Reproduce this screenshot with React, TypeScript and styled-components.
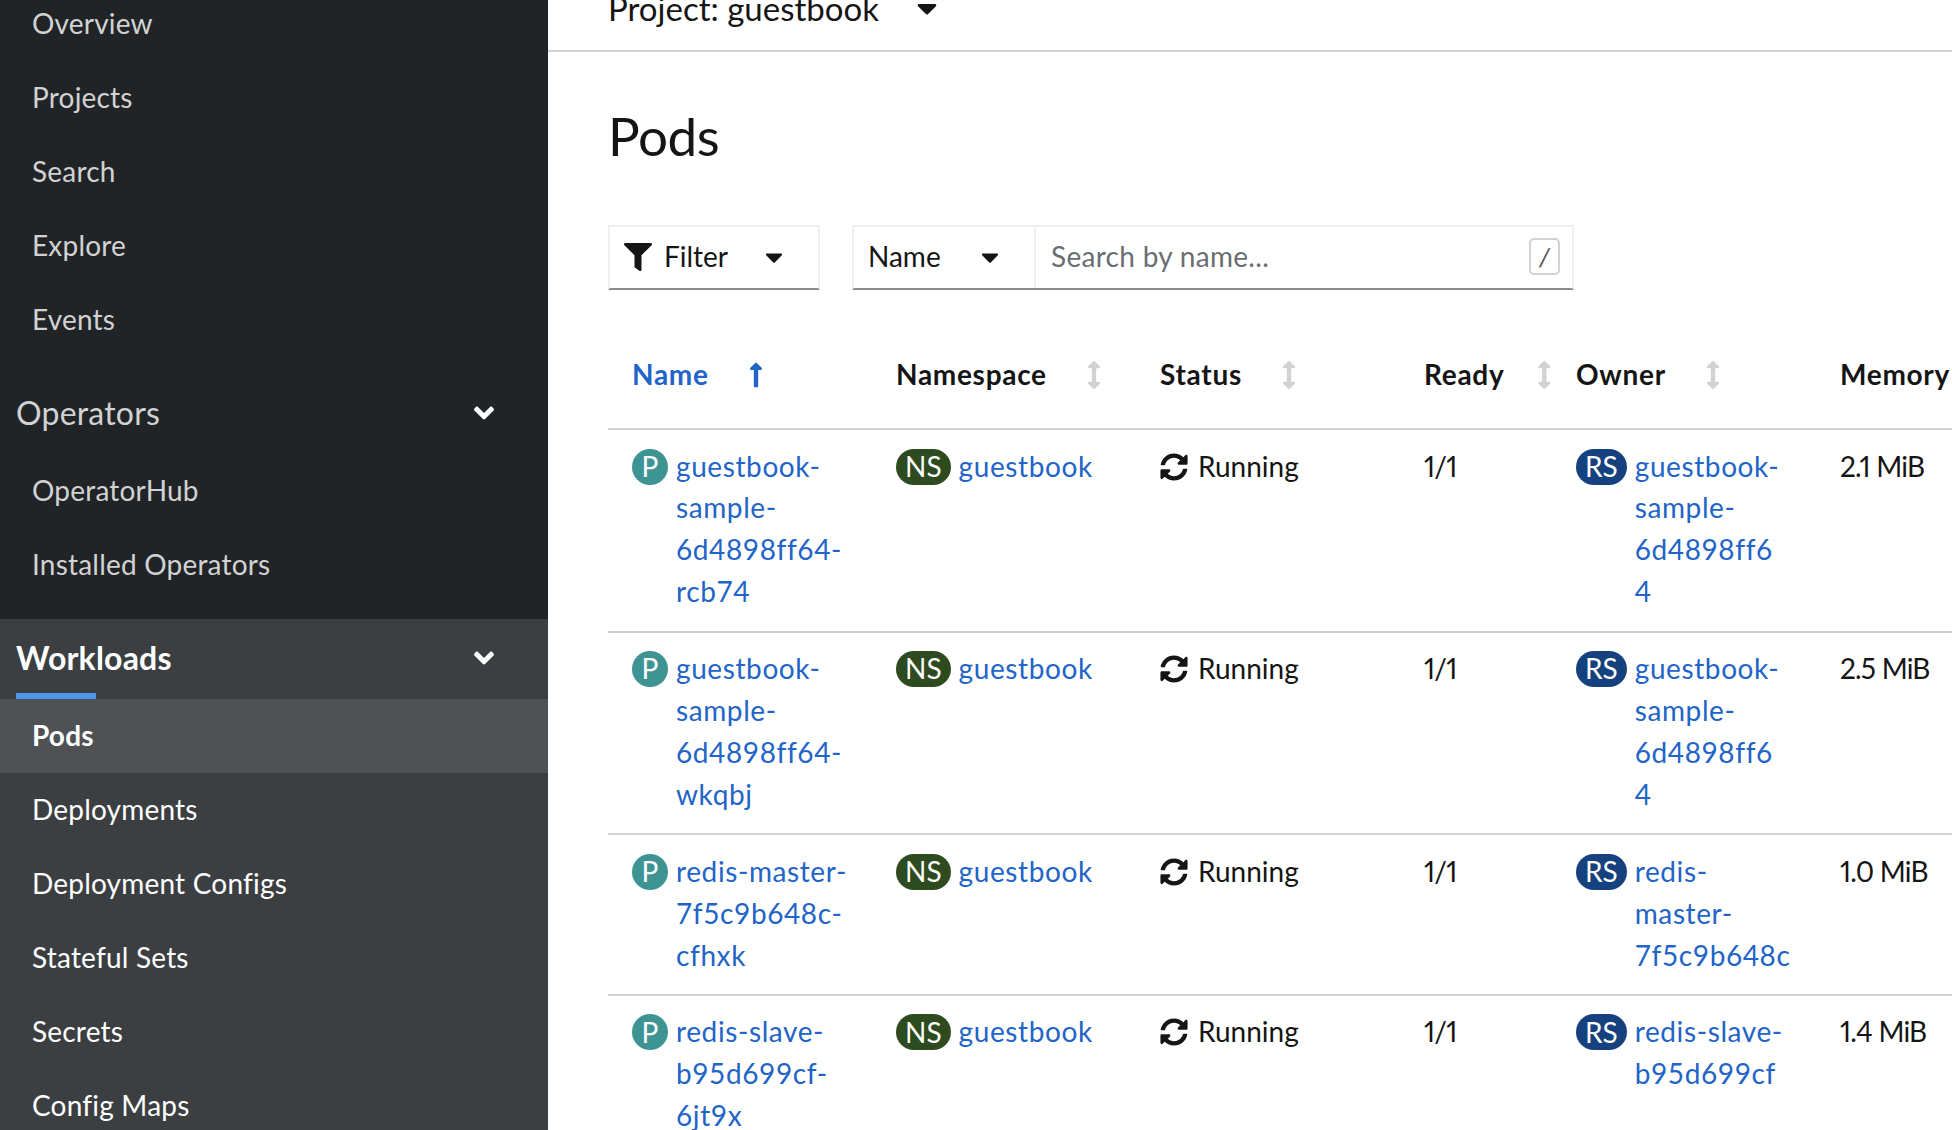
import React from 'react';
import styled, { createGlobalStyle } from 'styled-components';
import { FaAngleDown, FaArrowsAltV, FaCaretDown, FaFilter, FaLongArrowAltUp, FaSyncAlt } from 'react-icons/fa';

const FONT = `Lato, "Liberation Sans", sans-serif`;

const topItems = ['Overview', 'Projects', 'Search', 'Explore', 'Events'];
const operatorItems = ['OperatorHub', 'Installed Operators'];
const workloadItems = ['Pods', 'Deployments', 'Deployment Configs', 'Stateful Sets', 'Secrets', 'Config Maps'];

const columns = ['Name', 'Namespace', 'Status', 'Ready', 'Owner', 'Memory'];

const pods = [
  {
    name: ['guestbook-', 'sample-', '6d4898ff64-', 'rcb74'],
    owner: ['guestbook-', 'sample-', '6d4898ff6', '4'],
    memory: '2.1 MiB',
  },
  {
    name: ['guestbook-', 'sample-', '6d4898ff64-', 'wkqbj'],
    owner: ['guestbook-', 'sample-', '6d4898ff6', '4'],
    memory: '2.5 MiB',
  },
  {
    name: ['redis-master-', '7f5c9b648c-', 'cfhxk'],
    owner: ['redis-', 'master-', '7f5c9b648c'],
    memory: '1.0 MiB',
  },
  {
    name: ['redis-slave-', 'b95d699cf-', '6jt9x'],
    owner: ['redis-slave-', 'b95d699cf'],
    memory: '1.4 MiB',
  },
];

const App: React.FC = () => {
  return (
    <>
      <GlobalStyle />
      <Page>
        <Sidebar>
          <NavList>
            {topItems.map((item) => (
              <NavItem key={item}>{item}</NavItem>
            ))}
          </NavList>
          <NavGroup>
            <GroupHeading>
              Operators
              <FaAngleDown size={32} />
            </GroupHeading>
            {operatorItems.map((item) => (
              <NavItem key={item}>{item}</NavItem>
            ))}
          </NavGroup>
          <NavGroup $active>
            <GroupHeading $active>
              Workloads
              <FaAngleDown size={32} />
            </GroupHeading>
            {workloadItems.map((item) => (
              <NavItem key={item} $current={item === 'Pods'}>
                {item}
              </NavItem>
            ))}
          </NavGroup>
        </Sidebar>
        <Main>
          <ProjectBar>
            Project: guestbook
            <FaCaretDown size={32} />
          </ProjectBar>
          <Content>
            <Title>Pods</Title>
            <Toolbar>
              <FilterButton>
                <FaFilter size={28} />
                <span>Filter</span>
                <FaCaretDown size={28} />
              </FilterButton>
              <SearchGroup>
                <NameSelect>
                  <span>Name</span>
                  <FaCaretDown size={28} />
                </NameSelect>
                <SearchField>
                  Search by name...
                  <SlashKey>/</SlashKey>
                </SearchField>
              </SearchGroup>
            </Toolbar>
          </Content>
          <HeadRow>
            {columns.map((column, index) => (
              <HeadCell key={column} $sorted={index === 0}>
                {column}
                {index === 0 && <FaLongArrowAltUp size={28} />}
                {index > 0 && index < 5 && <FaArrowsAltV size={28} />}
              </HeadCell>
            ))}
          </HeadRow>
          {pods.map((pod) => (
            <PodRow key={pod.name.join('')}>
              <Cell>
                <Badge $color="#3e9393">P</Badge>
                <LinkLines>
                  {pod.name.map((line) => (
                    <span key={line}>{line}</span>
                  ))}
                </LinkLines>
              </Cell>
              <Cell>
                <Badge $color="#2e4a1f">NS</Badge>
                <LinkLines>
                  <span>guestbook</span>
                </LinkLines>
              </Cell>
              <Cell>
                <StatusIcon>
                  <FaSyncAlt size={28} />
                </StatusIcon>
                Running
              </Cell>
              <NumberCell>1/1</NumberCell>
              <Cell>
                <Badge $color="#15427e">RS</Badge>
                <LinkLines>
                  {pod.owner.map((line) => (
                    <span key={line}>{line}</span>
                  ))}
                </LinkLines>
              </Cell>
              <NumberCell>{pod.memory}</NumberCell>
            </PodRow>
          ))}
        </Main>
      </Page>
    </>
  );
};

const GlobalStyle = createGlobalStyle`
  html, body {
    margin: 0;
    height: 100%;
    overflow: hidden;
    background: #fff;
  }
  * {
    box-sizing: border-box;
  }
  body {
    font-family: ${FONT};
    font-size: 28px;
    line-height: 41.9px;
    color: #151515;
  }
`;

// the page is scrolled a little in the reference, so everything starts above the fold
const Page = styled.div`
  display: grid;
  grid-template-columns: 548px 1fr;
  height: 1142px;
  margin-top: -12px;
  overflow: hidden;
`;

const Sidebar = styled.nav`
  background: #212427;
  color: #d2d2d2;
  display: flex;
  flex-direction: column;
  letter-spacing: 0.2px;
`;

const NavList = styled.div`
  display: flex;
  flex-direction: column;
  margin-top: -1px;
`;

const NavGroup = styled.div<{ $active?: boolean }>`
  margin-top: ${(props) => (props.$active ? '17px' : '16px')};
  background: ${(props) => (props.$active ? '#3c3f42' : 'transparent')};
  color: ${(props) => (props.$active ? '#fff' : 'inherit')};
  flex: ${(props) => (props.$active ? 1 : 'none')};
`;

const NavItem = styled.div<{ $current?: boolean }>`
  height: 74px;
  padding-left: 32px;
  display: flex;
  align-items: center;
  background: ${(props) => (props.$current ? '#4f5255' : 'transparent')};
  color: ${(props) => (props.$current ? '#fff' : 'inherit')};
  font-weight: ${(props) => (props.$current ? 700 : 400)};
`;

const GroupHeading = styled.div<{ $active?: boolean }>`
  position: relative;
  height: ${(props) => (props.$active ? '80px' : '81px')};
  padding: 0 48px ${(props) => (props.$active ? '3px' : '1px')} 16px;
  display: flex;
  align-items: center;
  justify-content: space-between;
  font-size: 32px;
  font-weight: ${(props) => (props.$active ? 700 : 400)};
  color: ${(props) => (props.$active ? '#fff' : 'inherit')};

  svg {
    color: #fff;
  }

  &::after {
    content: '';
    display: ${(props) => (props.$active ? 'block' : 'none')};
    position: absolute;
    left: 16px;
    bottom: 0;
    width: 80px;
    height: 6px;
    background: #4a96e8;
  }
`;

const Main = styled.main`
  min-width: 0;
`;

const ProjectBar = styled.div`
  height: 64px;
  padding-left: 60px;
  display: flex;
  align-items: flex-start;
  gap: 32px;
  border-bottom: 2px solid #d2d2d2;
  font-size: 33px;
  line-height: 40px;

  svg {
    margin-top: 4px;
  }
`;

const Content = styled.div`
  padding: 51px 0 32px 60px;
`;

const Title = styled.h1`
  margin: 0 0 56px;
  font-size: 53px;
  line-height: 66px;
  font-weight: 400;
  letter-spacing: -0.5px;
`;

const Toolbar = styled.div`
  display: flex;
  gap: 32px;
`;

const FilterButton = styled.div`
  width: 212px;
  height: 65px;
  padding: 0 30px 2px 14px;
  display: flex;
  align-items: center;
  border: 2px solid #f0f0f0;
  border-bottom-color: #8a8d90;

  span {
    margin: 0 auto 0 12px;
  }
`;

const SearchGroup = styled.div`
  width: 722px;
  height: 65px;
  display: flex;
  border: 2px solid #f0f0f0;
  border-bottom-color: #8a8d90;
`;

const NameSelect = styled.div`
  width: 182px;
  padding: 0 30px 2px 14px;
  display: flex;
  align-items: center;
  justify-content: space-between;
  border-right: 2px solid #f0f0f0;
`;

const SearchField = styled.div`
  flex: 1;
  padding: 0 12px 2px 15px;
  display: flex;
  align-items: center;
  justify-content: space-between;
  color: #6a6e73;
  letter-spacing: 0.3px;
`;

const SlashKey = styled.span`
  width: 31px;
  height: 37px;
  display: flex;
  align-items: center;
  justify-content: center;
  border: 2px solid #d2d2d2;
  border-radius: 5px;
  font-size: 26px;
  font-style: italic;
  color: #4f5255;
`;

const tableColumns = '264px 264px 264px 152px 264px 1fr';

const HeadRow = styled.div`
  margin-left: 60px;
  height: 108px;
  display: grid;
  grid-template-columns: ${tableColumns};
  border-bottom: 2px solid #d2d2d2;
`;

const HeadCell = styled.div<{ $sorted?: boolean }>`
  padding-left: 24px;
  display: flex;
  align-items: center;
  gap: 33px;
  font-weight: 700;
  letter-spacing: 0.7px;
  white-space: nowrap;
  color: ${(props) => (props.$sorted ? '#2264c7' : '#151515')};

  svg {
    color: ${(props) => (props.$sorted ? '#2264c7' : '#d2d2d2')};
  }
`;

const PodRow = styled.div`
  margin-left: 60px;
  padding: 15.5px 0 17.5px;
  display: grid;
  grid-template-columns: ${tableColumns};
  border-bottom: 2px solid #d2d2d2;
`;

const Cell = styled.div`
  padding-left: 24px;
  display: flex;
  align-items: flex-start;
`;

const NumberCell = styled(Cell)`
  font-variant-numeric: proportional-nums;
  letter-spacing: -0.8px;
`;

const Badge = styled.span<{ $color: string }>`
  flex: none;
  min-width: 36px;
  height: 36px;
  margin: 3px 8px 0 0;
  padding: 0 9px;
  display: flex;
  align-items: center;
  justify-content: center;
  border-radius: 18px;
  background: ${(props) => props.$color};
  color: #fff;
`;

const LinkLines = styled.div`
  display: flex;
  flex-direction: column;
  color: #2264c7;
  letter-spacing: 0.6px;
`;

const StatusIcon = styled.span`
  height: 42px;
  margin-right: 10px;
  display: flex;
  align-items: center;
`;

export default App;
